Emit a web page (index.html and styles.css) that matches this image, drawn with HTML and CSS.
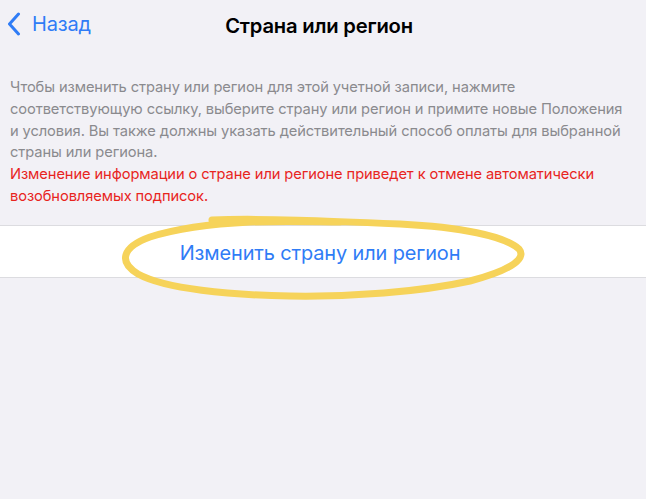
FILE: index.html
```html
<!DOCTYPE html>
<html lang="ru">
<head>
<meta charset="utf-8">
<title>Страна или регион</title>
<link rel="stylesheet" href="styles.css">
</head>
<body>
<div class="screen">
  <header class="nav">
    <a class="back" href="#">
      <svg class="chevron" width="14" height="24" viewBox="0 0 14 24"><path d="M11.5 2 L2.5 12 L11.5 22" fill="none" stroke="#2f7cf6" stroke-width="3" stroke-linecap="round" stroke-linejoin="round"/></svg>
      <span>Назад</span>
    </a>
    <h1 class="title">Страна или регион</h1>
  </header>
  <p class="info">Чтобы изменить страну или регион для этой учетной записи, нажмите<br>соответствующую ссылку, выберите страну или регион и примите новые Положения<br>и условия. Вы также должны указать действительный способ оплаты для выбранной<br>страны или региона.<br><span class="warn">Изменение информации о стране или регионе приведет к отмене автоматически<br>возобновляемых подписок.</span></p>
  <div class="row">
    <a class="change" href="#">Изменить страну или регион</a>
  </div>
  <svg class="marker" width="646" height="499" viewBox="0 0 646 499">
    <path d="M212 220 C260 218 330 221 400 224 C460 227 505 236 519 249 C528 260 505 272 470 281 C420 292 350 297 290 296 C230 295 165 289 138 274 C118 262 122 247 150 237 C175 229 210 224 250 222 C290 221 320 222 340 222" fill="none" stroke="#f6d35a" stroke-width="7" stroke-linecap="round" stroke-linejoin="round"/>
  </svg>
</div>
</body>
</html>
```
FILE: styles.css
```css
html, body {
  margin: 0;
  padding: 0;
}
body {
  background: #f2f1f6;
  font-family: Inter, "Noto Sans", sans-serif;
  width: 646px;
  height: 499px;
  overflow: hidden;
}
.screen {
  position: relative;
  width: 646px;
  height: 499px;
}
.nav {
  position: relative;
  height: 48px;
  display: flex;
  align-items: center;
  justify-content: center;
}
.back {
  position: absolute;
  left: 7px;
  top: 12px;
  display: flex;
  align-items: center;
  gap: 11px;
  color: #2f7cf6;
  text-decoration: none;
  font-size: 20px;
  letter-spacing: -0.2px;
}
.chevron {
  display: block;
}
.title {
  margin: 0;
  font-size: 20.2px;
  font-weight: 600;
  color: #000;
  letter-spacing: -0.2px;
  padding-top: 2px;
  padding-right: 8px;
}
.info {
  margin: 29px 0 0 0;
  padding: 0 10px;
  font-size: 14.7px;
  line-height: 21.8px;
  color: #8a8a8e;
  letter-spacing: -0.1px;
}
.warn {
  color: #e8251e;
}
.row {
  margin-top: 17px;
  background: #fff;
  border-top: 1.5px solid #dcdce0;
  border-bottom: 1.5px solid #dcdce0;
  height: 51px;
  display: flex;
  align-items: center;
  justify-content: center;
}
.change {
  color: #2f7cf6;
  text-decoration: none;
  font-size: 19.9px;
  letter-spacing: -0.1px;
  padding-right: 6px;
  padding-top: 3px;
}
.marker {
  position: absolute;
  left: 0;
  top: 0;
  pointer-events: none;
}
```
